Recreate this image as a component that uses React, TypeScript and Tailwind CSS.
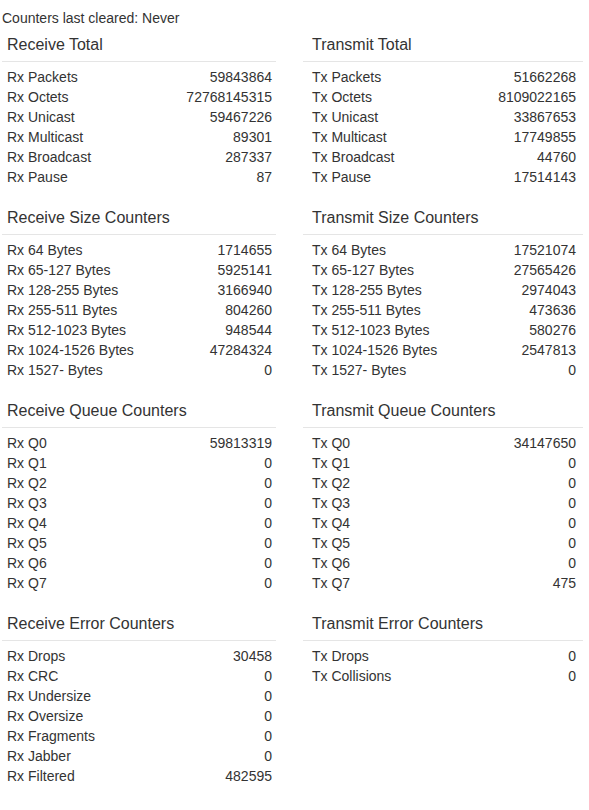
import React from 'react';

type Row = [string, string];

interface Section {
  title: string;
  rows: Row[];
}

const pairs: [Section, Section][] = [
  [
    {
      title: 'Receive Total',
      rows: [
        ['Rx Packets', '59843864'],
        ['Rx Octets', '72768145315'],
        ['Rx Unicast', '59467226'],
        ['Rx Multicast', '89301'],
        ['Rx Broadcast', '287337'],
        ['Rx Pause', '87'],
      ],
    },
    {
      title: 'Transmit Total',
      rows: [
        ['Tx Packets', '51662268'],
        ['Tx Octets', '8109022165'],
        ['Tx Unicast', '33867653'],
        ['Tx Multicast', '17749855'],
        ['Tx Broadcast', '44760'],
        ['Tx Pause', '17514143'],
      ],
    },
  ],
  [
    {
      title: 'Receive Size Counters',
      rows: [
        ['Rx 64 Bytes', '1714655'],
        ['Rx 65-127 Bytes', '5925141'],
        ['Rx 128-255 Bytes', '3166940'],
        ['Rx 255-511 Bytes', '804260'],
        ['Rx 512-1023 Bytes', '948544'],
        ['Rx 1024-1526 Bytes', '47284324'],
        ['Rx 1527- Bytes', '0'],
      ],
    },
    {
      title: 'Transmit Size Counters',
      rows: [
        ['Tx 64 Bytes', '17521074'],
        ['Tx 65-127 Bytes', '27565426'],
        ['Tx 128-255 Bytes', '2974043'],
        ['Tx 255-511 Bytes', '473636'],
        ['Tx 512-1023 Bytes', '580276'],
        ['Tx 1024-1526 Bytes', '2547813'],
        ['Tx 1527- Bytes', '0'],
      ],
    },
  ],
  [
    {
      title: 'Receive Queue Counters',
      rows: [
        ['Rx Q0', '59813319'],
        ['Rx Q1', '0'],
        ['Rx Q2', '0'],
        ['Rx Q3', '0'],
        ['Rx Q4', '0'],
        ['Rx Q5', '0'],
        ['Rx Q6', '0'],
        ['Rx Q7', '0'],
      ],
    },
    {
      title: 'Transmit Queue Counters',
      rows: [
        ['Tx Q0', '34147650'],
        ['Tx Q1', '0'],
        ['Tx Q2', '0'],
        ['Tx Q3', '0'],
        ['Tx Q4', '0'],
        ['Tx Q5', '0'],
        ['Tx Q6', '0'],
        ['Tx Q7', '475'],
      ],
    },
  ],
  [
    {
      title: 'Receive Error Counters',
      rows: [
        ['Rx Drops', '30458'],
        ['Rx CRC', '0'],
        ['Rx Undersize', '0'],
        ['Rx Oversize', '0'],
        ['Rx Fragments', '0'],
        ['Rx Jabber', '0'],
        ['Rx Filtered', '482595'],
      ],
    },
    {
      title: 'Transmit Error Counters',
      rows: [
        ['Tx Drops', '0'],
        ['Tx Collisions', '0'],
      ],
    },
  ],
];

const CounterTable: React.FC<{ section: Section; side: 'left' | 'right' }> = ({ section, side }) => {
  const pl = side === 'left' ? 'pl-[5px]' : 'pl-[9px]';
  const pr = side === 'left' ? 'pr-[4px]' : 'pr-[7px]';
  return (
    <div>
      <div className={`text-[16px] leading-[18px] pb-[7px] border-b border-[#e5e5e5] ${pl}`}>
        {section.title}
      </div>
      <div className="mt-[5px]">
        {section.rows.map(([label, value]) => (
          <div key={label} className={`flex justify-between h-5 leading-5 text-[14px] ${pl} ${pr}`}>
            <span>{label}</span>
            <span>{value}</span>
          </div>
        ))}
      </div>
    </div>
  );
};

export default function App() {
  return (
    <div
      className="bg-white text-[#333] min-h-screen pl-[2px] pt-2"
      style={{ fontFamily: '"Liberation Sans", Arial, sans-serif' }}
    >
      <div className="text-[14px] leading-5">Counters last cleared: Never</div>
      <div className="mt-2 grid grid-cols-[274px_280px] gap-x-[27px] gap-y-[22px]">
        {pairs.map(([left, right]) => (
          <React.Fragment key={left.title}>
            <CounterTable section={left} side="left" />
            <CounterTable section={right} side="right" />
          </React.Fragment>
        ))}
      </div>
    </div>
  );
}
